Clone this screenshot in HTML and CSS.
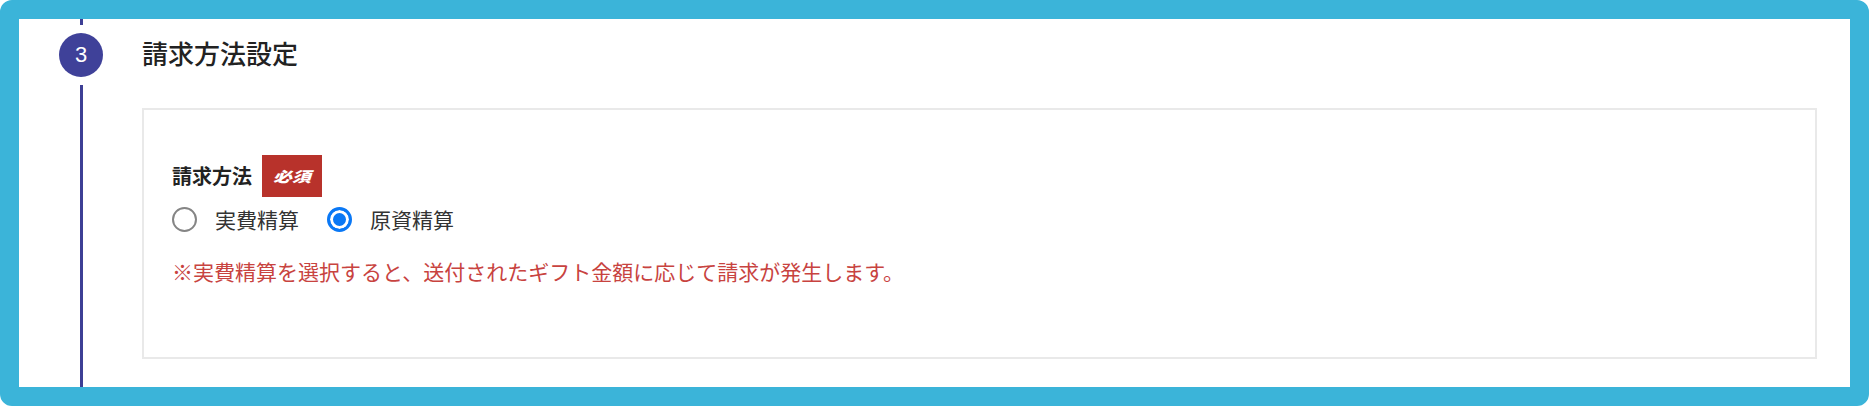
FILE: index.html
```html
<!DOCTYPE html>
<html lang="ja">
<head>
  <meta charset="UTF-8">
  <meta name="viewport" content="width=device-width, initial-scale=1.0">
  <title>請求方法設定</title>
  <link rel="stylesheet" href="styles.css">
</head>
<body>
  <div class="frame">
    <div class="rail">
      <span class="rail-line rail-line-top"></span>
      <span class="step-num">3</span>
      <span class="rail-line rail-line-rest"></span>
    </div>
    <div class="section">
      <h2 class="section-title">請求方法設定</h2>
      <div class="card">
        <div class="field-head">
          <span class="field-label">請求方法</span>
          <span class="badge-required"><span class="badge-text">必須</span></span>
        </div>
        <div class="radio-group">
          <label class="radio-item">
            <input type="radio" name="billing" value="actual">
            <span>実費精算</span>
          </label>
          <label class="radio-item">
            <input type="radio" name="billing" value="fund" checked>
            <span>原資精算</span>
          </label>
        </div>
        <p class="field-note">※実費精算を選択すると、送付されたギフト金額に応じて請求が発生します。</p>
      </div>
    </div>
  </div>
</body>
</html>
```

FILE: styles.css
```css
/* page base */
body {
  margin: 0;
  background-color: #fff;
  font-family: "Noto Sans CJK JP", "Noto Sans", sans-serif;
}

/* blue outline round the whole capture */
.frame {
  width: 1869px;
  height: 406px;
  box-sizing: border-box;
  border: 19px solid #3bb4d9;
  border-radius: 12px;
  background-color: #fff;
  display: flex;
}

/* step rail on the left */
.rail {
  width: 44px;
  margin-left: 40px;
  display: flex;
  flex-direction: column;
  align-items: center;
}

.rail-line {
  width: 3px;
  background-color: #3d3f95;
}

.rail-line-top {
  height: 6px;
}

.rail-line-rest {
  flex: 1;
}

.step-num {
  width: 44px;
  height: 44px;
  margin: 8px 0;
  border-radius: 50%;
  background-color: #3f4199;
  color: #fff;
  font-family: "Liberation Sans", Arial, sans-serif;
  font-size: 22px;
  display: flex;
  align-items: center;
  justify-content: center;
}

/* section body */
.section {
  flex: 1;
  margin-left: 39px;
  margin-right: 33px;
}

.section-title {
  margin: 21px 0 0;
  font-size: 26px;
  font-weight: 500;
  line-height: 1;
  color: #222;
}

.card {
  margin-top: 42px;
  height: 251px;
  box-sizing: border-box;
  border: 2px solid #e9e9e9;
  padding: 45px 28px 0;
}

.field-head {
  display: flex;
  align-items: center;
  gap: 10px;
}

.field-label {
  font-size: 20px;
  font-weight: 700;
  line-height: 1;
  color: #222;
}

.badge-required {
  width: 60px;
  height: 42px;
  background-color: #b8322b;
  display: flex;
  align-items: center;
  justify-content: center;
}

.badge-text {
  display: inline-block;
  color: #fff;
  font-size: 18px;
  font-weight: 900;
  font-style: italic;
  line-height: 1;
  transform: scale(1.05, 0.8);
}

.radio-group {
  margin-top: 10px;
  display: flex;
  align-items: center;
  gap: 28px;
}

.radio-item {
  display: flex;
  align-items: center;
  gap: 18px;
  font-size: 21px;
  line-height: 1;
  color: #333;
}

/* radios drawn by hand so the rings are as thick as the capture */
.radio-item input {
  appearance: none;
  width: 25px;
  height: 25px;
  margin: 0;
  box-sizing: border-box;
  border: 2px solid #858585;
  border-radius: 50%;
  background-color: #fff;
}

.radio-item input:checked {
  border: 3px solid #0a78f5;
  background-color: #0a78f5;
  box-shadow: inset 0 0 0 3px #fff;
}

.field-note {
  margin: 29px 0 0;
  font-size: 21px;
  line-height: 1;
  color: #c8433f;
}
```
